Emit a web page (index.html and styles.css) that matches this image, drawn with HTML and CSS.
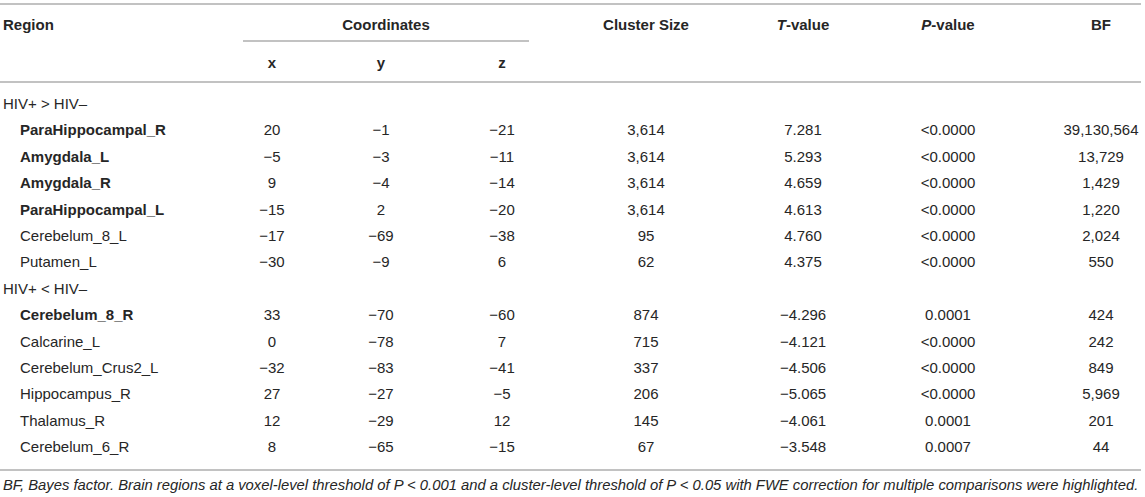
FILE: index.html
```html
<!DOCTYPE html>
<html lang="en">
<head>
<meta charset="utf-8">
<title>Brain regions table</title>
<link rel="stylesheet" href="styles.css">
</head>
<body>
<div class="wrap">
<table class="data">
  <colgroup>
    <col class="w-region"><col class="w-x"><col class="w-y"><col class="w-z"><col class="w-cl"><col class="w-t"><col class="w-p"><col class="w-bf">
  </colgroup>
  <thead>
    <tr class="h1">
      <th rowspan="2" class="region">Region</th>
      <th colspan="3" class="coord"><div class="coord-in">Coordinates</div></th>
      <th rowspan="2">Cluster Size</th>
      <th rowspan="2"><i>T</i>-value</th>
      <th rowspan="2"><i>P</i>-value</th>
      <th rowspan="2" class="bf">BF</th>
    </tr>
    <tr class="h2">
      <th>x</th><th>y</th><th>z</th>
    </tr>
  </thead>
  <tbody>
    <tr class="group first"><td colspan="8">HIV+ &gt; HIV–</td></tr>
    <tr><td class="name"><b>ParaHippocampal_R</b></td><td>20</td><td>−1</td><td>−21</td><td>3,614</td><td>7.281</td><td>&lt;0.0000</td><td class="bf">39,130,564</td></tr>
    <tr><td class="name"><b>Amygdala_L</b></td><td>−5</td><td>−3</td><td>−11</td><td>3,614</td><td>5.293</td><td>&lt;0.0000</td><td class="bf">13,729</td></tr>
    <tr><td class="name"><b>Amygdala_R</b></td><td>9</td><td>−4</td><td>−14</td><td>3,614</td><td>4.659</td><td>&lt;0.0000</td><td class="bf">1,429</td></tr>
    <tr><td class="name"><b>ParaHippocampal_L</b></td><td>−15</td><td>2</td><td>−20</td><td>3,614</td><td>4.613</td><td>&lt;0.0000</td><td class="bf">1,220</td></tr>
    <tr><td class="name">Cerebelum_8_L</td><td>−17</td><td>−69</td><td>−38</td><td>95</td><td>4.760</td><td>&lt;0.0000</td><td class="bf">2,024</td></tr>
    <tr><td class="name">Putamen_L</td><td>−30</td><td>−9</td><td>6</td><td>62</td><td>4.375</td><td>&lt;0.0000</td><td class="bf">550</td></tr>
    <tr class="group"><td colspan="8">HIV+ &lt; HIV–</td></tr>
    <tr><td class="name"><b>Cerebelum_8_R</b></td><td>33</td><td>−70</td><td>−60</td><td>874</td><td>−4.296</td><td>0.0001</td><td class="bf">424</td></tr>
    <tr><td class="name">Calcarine_L</td><td>0</td><td>−78</td><td>7</td><td>715</td><td>−4.121</td><td>&lt;0.0000</td><td class="bf">242</td></tr>
    <tr><td class="name">Cerebelum_Crus2_L</td><td>−32</td><td>−83</td><td>−41</td><td>337</td><td>−4.506</td><td>&lt;0.0000</td><td class="bf">849</td></tr>
    <tr><td class="name">Hippocampus_R</td><td>27</td><td>−27</td><td>−5</td><td>206</td><td>−5.065</td><td>&lt;0.0000</td><td class="bf">5,969</td></tr>
    <tr><td class="name">Thalamus_R</td><td>12</td><td>−29</td><td>12</td><td>145</td><td>−4.061</td><td>0.0001</td><td class="bf">201</td></tr>
    <tr class="last"><td class="name">Cerebelum_6_R</td><td>8</td><td>−65</td><td>−15</td><td>67</td><td>−3.548</td><td>0.0007</td><td class="bf">44</td></tr>
  </tbody>
</table>
<p class="note">BF, Bayes factor. Brain regions at a voxel-level threshold of P &lt; 0.001 and a cluster-level threshold of P &lt; 0.05 with FWE correction for multiple comparisons were highlighted.</p>
</div>
</body>
</html>
```
FILE: styles.css
```css
html, body {
  margin: 0;
  padding: 0;
  background: #ffffff;
}
body {
  font-family: "Liberation Sans", Arial, Helvetica, sans-serif;
  color: #262626;
  font-size: 15px;
}
.wrap {
  padding-top: 3px;
  width: 1141px;
}
.data {
  width: 1141px;
  table-layout: fixed;
  border-collapse: collapse;
  border-top: 2px solid #c2c2c2;
  border-bottom: 2px solid #c2c2c2;
}
.w-region { width: 243px; }
.w-x { width: 58px; }
.w-y { width: 160px; }
.w-z { width: 82px; }
.w-cl { width: 206px; }
.w-t { width: 108px; }
.w-p { width: 182px; }
.w-bf { width: 102px; }

th, td {
  padding: 0;
  text-align: center;
  white-space: nowrap;
  line-height: 17px;
}
th {
  font-weight: bold;
  vertical-align: top;
}
thead {
  border-bottom: 2px solid #c2c2c2;
}
.h1 th {
  padding-top: 11px;
}
.h1 th.coord {
  padding-top: 0;
}
.coord-in {
  padding-top: 11px;
  padding-bottom: 7px;
  margin-right: 14px;
  border-bottom: 2px solid #c2c2c2;
}
.h2 th {
  padding-top: 12px;
  padding-bottom: 10px;
}
th.region {
  text-align: left;
  padding-left: 3px;
}
.bf {
  padding-left: 22px;
}
tbody td {
  line-height: 26.4px;
}
tbody tr.first td {
  padding-top: 8px;
}
tbody tr.last td {
  padding-bottom: 8px;
}
tr.group td {
  text-align: left;
  padding-left: 3px;
}
td.name {
  text-align: left;
  padding-left: 20px;
}
.note {
  margin: 0;
  padding-top: 6px;
  padding-left: 3px;
  font-style: italic;
  font-size: 14.8px;
  line-height: 17px;
  white-space: nowrap;
}
```
